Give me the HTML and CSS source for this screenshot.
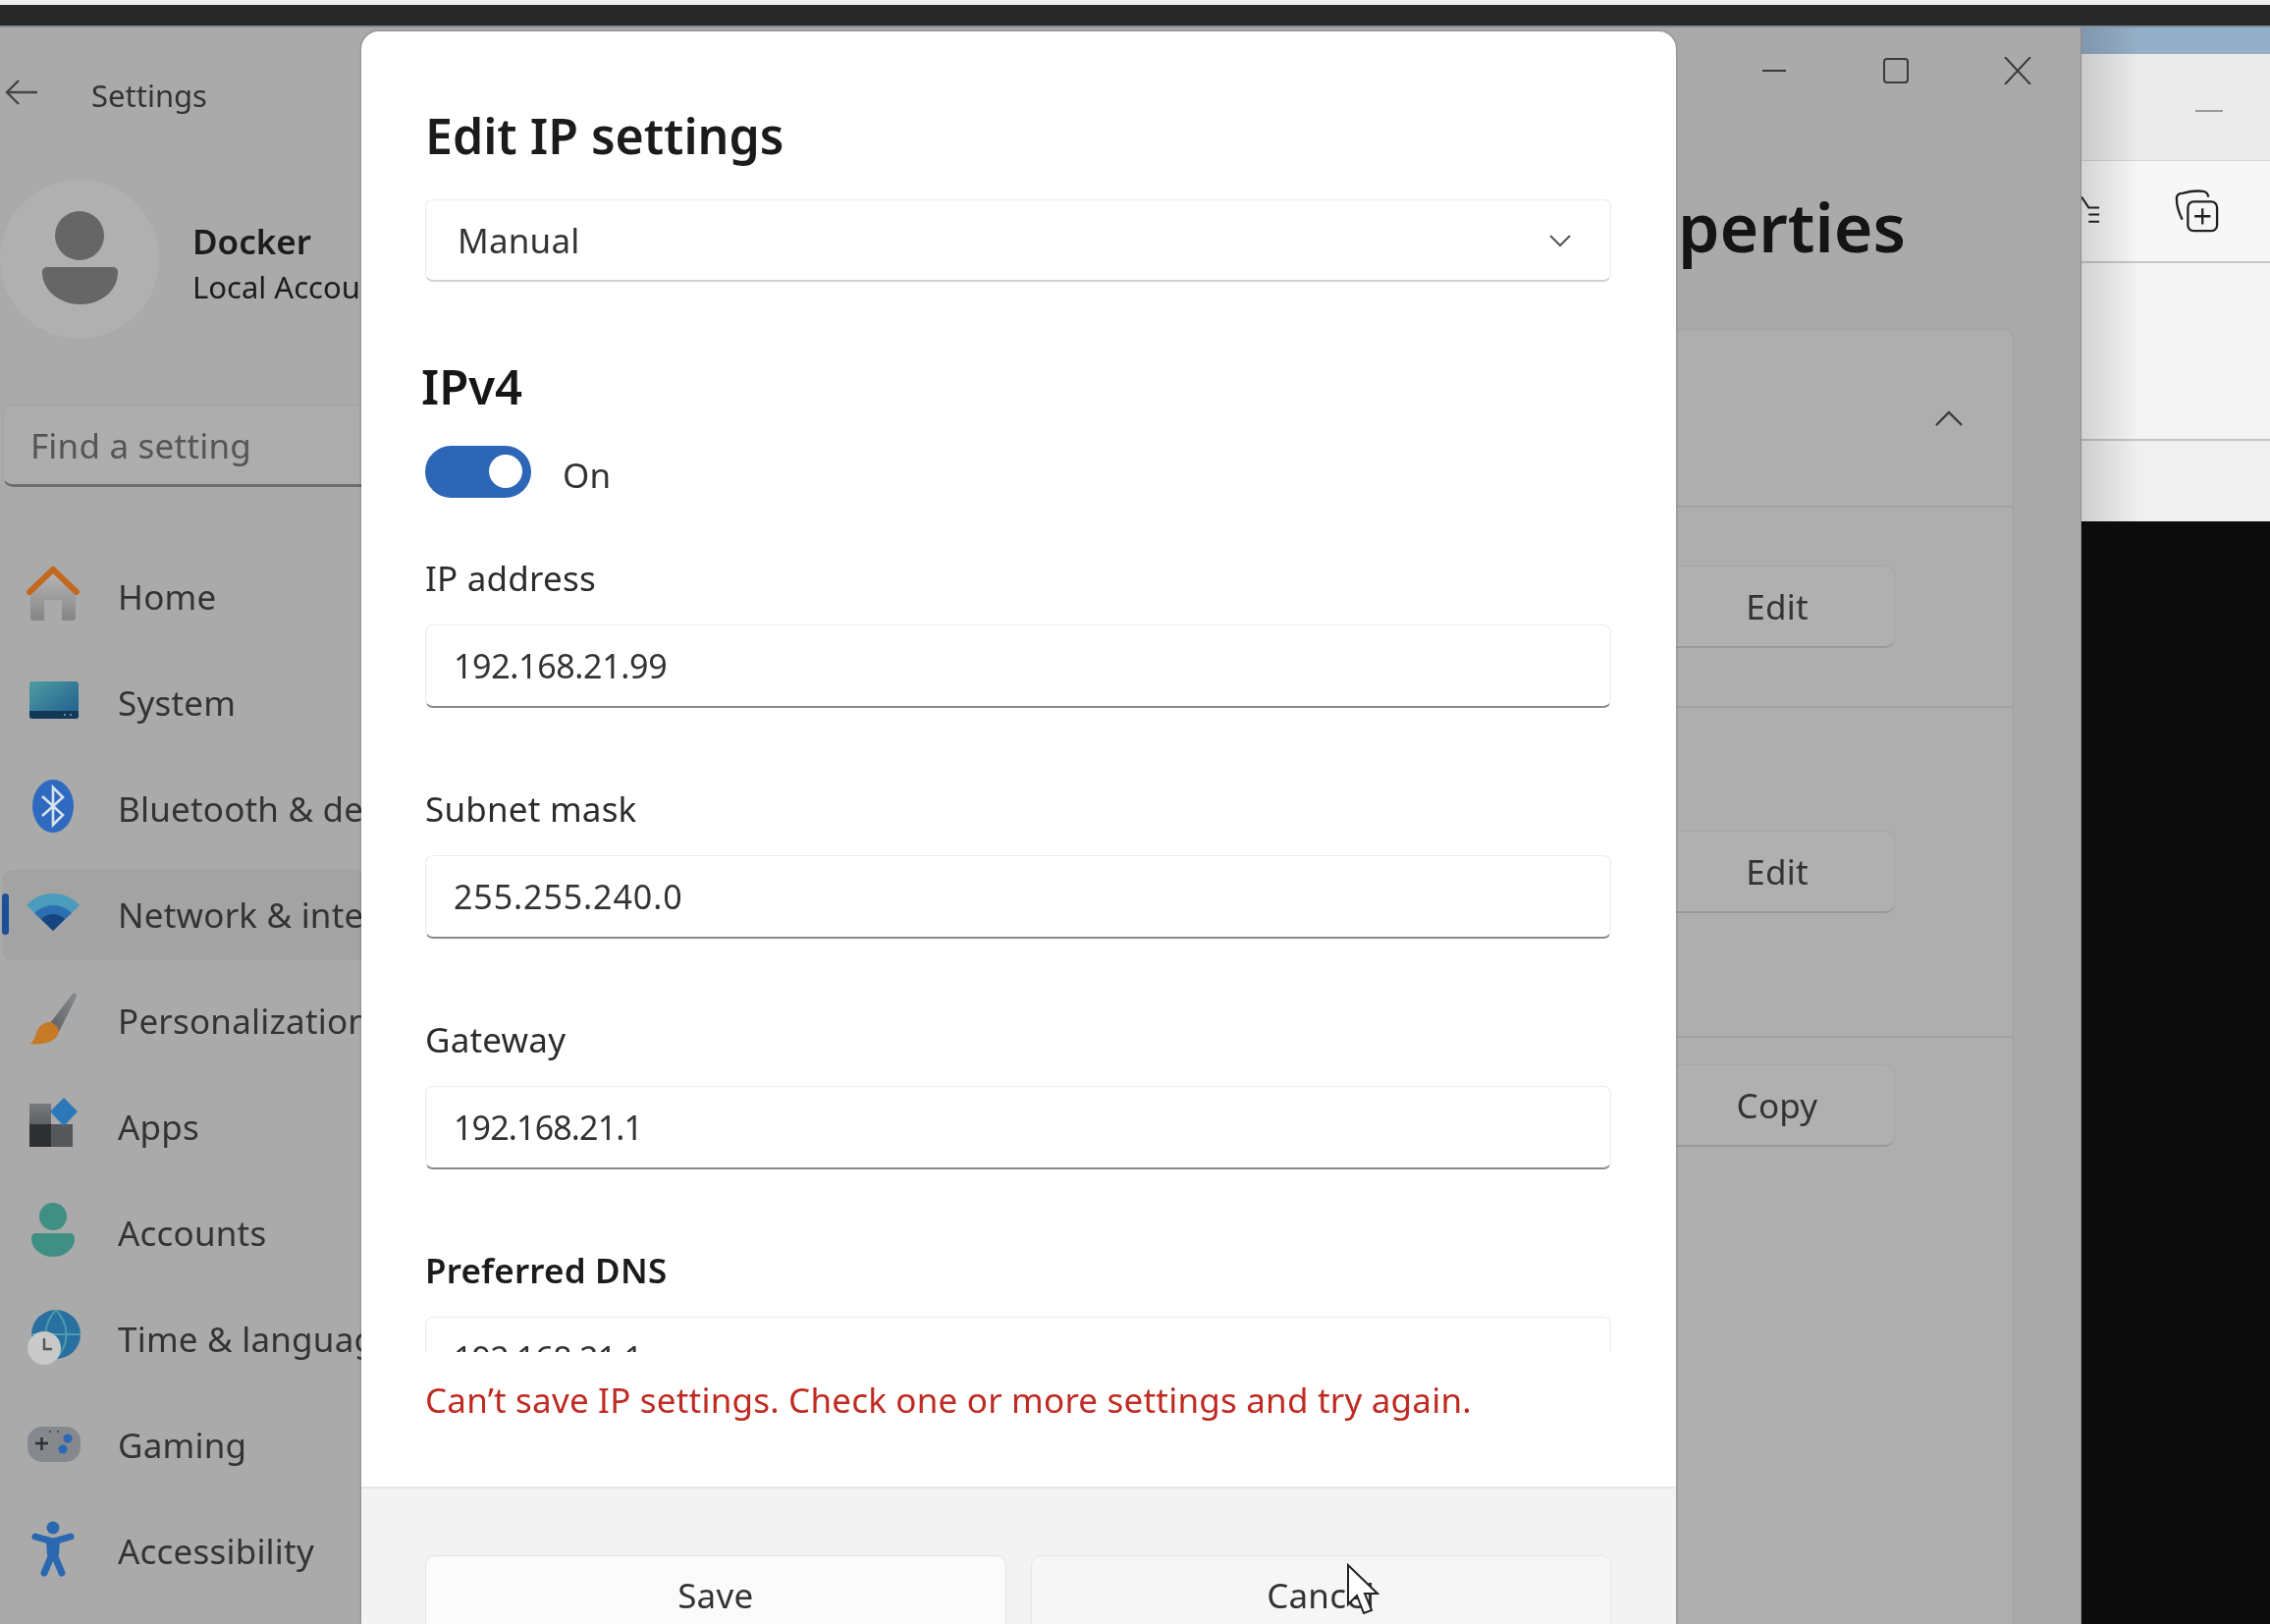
FILE: index.html
```html
<!DOCTYPE html>
<html lang="en">
<head>
    <meta charset="UTF-8">
    <meta name="viewport" content="width=device-width, initial-scale=1.0">
    <title>Edit IP settings</title>
    <link rel="stylesheet" href="styles.css">
</head>

<body>
    <div class="top-strip"></div>
    <div class="desktop">
        <div class="settings-window">
            <aside class="sidebar">
                <div class="app-title">
                    <svg class="back-arrow" viewBox="0 0 34 28"><path d="M33 14H3M14 2 2 14l12 12" fill="none" stroke="#444" stroke-width="2.4"/></svg>
                    <span>Settings</span>
                </div>
                <div class="profile">
                    <div class="avatar">
                        <svg viewBox="0 0 162 162"><circle cx="81" cy="57" r="25" fill="#666"/><path d="M43 94c0-3 2-5 5-5h67c3 0 5 2 5 5 0 20-18 33-38 33s-39-13-39-33z" fill="#666"/></svg>
                    </div>
                    <div class="profile-text">
                        <div class="profile-name">Docker</div>
                        <div class="profile-type">Local Account</div>
                    </div>
                </div>
                <div class="search">Find a setting</div>
                <nav class="nav">
                    <div class="nav-item">
                        <svg class="nav-icon" viewBox="0 0 64 64"><defs><linearGradient id="homeg" x1="0" y1="0" x2="0" y2="1"><stop offset="0" stop-color="#b8b8b8"/><stop offset="1" stop-color="#858585"/></linearGradient></defs><path d="M9 28 32 8l23 20v28c0 2-1 3-3 3H41V38H23v21H12c-2 0-3-1-3-3z" fill="url(#homeg)"/><path d="M8 30 32 7l24 23" fill="none" stroke="#c2691f" stroke-width="6" stroke-linejoin="round" stroke-linecap="round"/></svg>
                        <span>Home</span>
                    </div>
                    <div class="nav-item">
                        <svg class="nav-icon" viewBox="0 0 64 64"><defs><linearGradient id="sysg" x1="0" y1="0" x2="1" y2="1"><stop offset="0" stop-color="#4d9da1"/><stop offset="1" stop-color="#1f5a8e"/></linearGradient></defs><rect x="8" y="13" width="50" height="38" rx="3" fill="url(#sysg)"/><path d="M8 43h50v5c0 2-1 3-3 3H11c-2 0-3-1-3-3z" fill="#123a56"/><circle cx="44" cy="47" r="1" fill="#7fa6b8"/><circle cx="50" cy="47" r="1" fill="#7fa6b8"/></svg>
                        <span>System</span>
                    </div>
                    <div class="nav-item">
                        <svg class="nav-icon" viewBox="0 0 64 64"><ellipse cx="32" cy="32" rx="21" ry="27" fill="#2f6ac0"/><path d="M21 22 42 41 32 51V13l10 10-21 19" fill="none" stroke="#d8e2ee" stroke-width="2.6"/></svg>
                        <span>Bluetooth &amp; devices</span>
                    </div>
                    <div class="nav-item is-active">
                        <svg class="nav-icon" viewBox="0 0 64 64"><path d="M5 25C12 17 22 13 32 13s20 4 27 12L32 51z" fill="#4b9cbc"/><path d="M13 33c5-5 12-8 19-8s14 3 19 8L32 51z" fill="#2b6fb0"/><path d="M20 39c3-3 8-5 12-5s9 2 12 5L32 51z" fill="#17457f"/></svg>
                        <span>Network &amp; internet</span>
                    </div>
                    <div class="nav-item">
                        <svg class="nav-icon" viewBox="0 0 64 64"><defs><linearGradient id="brushg" x1="0" y1="1" x2="1" y2="0"><stop offset="0" stop-color="#5d6063"/><stop offset="1" stop-color="#8a8d90"/></linearGradient></defs><path d="M29 37 52 7c2-2 5 0 4 3L38 46z" fill="url(#brushg)"/><path d="M28 36c4 0 9 4 10 9-1 9-12 15-30 13 5-2 5-6 7-11 2-6 7-11 13-11z" fill="#c77a26"/></svg>
                        <span>Personalization</span>
                    </div>
                    <div class="nav-item">
                        <svg class="nav-icon" viewBox="0 0 64 64"><defs><linearGradient id="appg" x1="0" y1="0" x2="0" y2="1"><stop offset="0" stop-color="#77797c"/><stop offset="1" stop-color="#5f6164"/></linearGradient></defs><rect x="8" y="11" width="22" height="21" fill="url(#appg)"/><rect x="8" y="32" width="22" height="23" fill="#2e2f31"/><rect x="30" y="32" width="22" height="23" fill="#55575a"/><path d="M43 5 57 19 43 34 29 19z" fill="#2c78b8"/></svg>
                        <span>Apps</span>
                    </div>
                    <div class="nav-item">
                        <svg class="nav-icon" viewBox="0 0 64 64"><circle cx="32" cy="18" r="14" fill="#3f8f84"/><path d="M10 40c0-3 2-5 5-5h34c3 0 5 2 5 5 0 12-11 19-22 19S10 52 10 40z" fill="#3f8f84"/></svg>
                        <span>Accounts</span>
                    </div>
                    <div class="nav-item">
                        <svg class="nav-icon" viewBox="0 0 64 64"><circle cx="35" cy="30" r="25" fill="#28709f"/><path d="M10 30h50M35 5c-14 15-14 35 0 50M35 5c14 15 14 35 0 50" fill="none" stroke="#4b9cae" stroke-width="2"/><circle cx="23" cy="44" r="17" fill="#c9c9c9"/><path d="M23 34v11h8" fill="none" stroke="#555" stroke-width="2.4"/></svg>
                        <span>Time &amp; language</span>
                    </div>
                    <div class="nav-item">
                        <svg class="nav-icon" viewBox="0 0 64 64"><rect x="6" y="16" width="54" height="36" rx="15" fill="#85888c"/><path d="M14 33h13M20.500 27v13" stroke="#2f2f2f" stroke-width="2.400"/><circle cx="47" cy="28" r="4.500" fill="#2a68b5"/><circle cx="42" cy="39" r="4.500" fill="#2a68b5"/><circle cx="29" cy="21" r="1" fill="#3a3a3a"/><circle cx="37" cy="21" r="1" fill="#3a3a3a"/></svg>
                        <span>Gaming</span>
                    </div>
                    <div class="nav-item">
                        <svg class="nav-icon" viewBox="0 0 64 64"><circle cx="32" cy="11" r="6.500" fill="#2a68b0"/><path d="M14 20 32 25l18-5M32 36 23 57M32 36l9 21" fill="none" stroke="#2a68b0" stroke-width="7" stroke-linecap="round"/><path d="M25 23h14l-1 16H26z" fill="#2a68b0"/></svg>
                        <span>Accessibility</span>
                    </div>
                </nav>
            </aside>

            <main class="main">
                <div class="window-controls">
                    <svg viewBox="0 0 28 28"><path d="M2 14h24" stroke="#3a3a3a" stroke-width="2"/></svg>
                    <svg viewBox="0 0 28 28"><rect x="2" y="2" width="24" height="24" rx="3" fill="none" stroke="#3a3a3a" stroke-width="2"/></svg>
                    <svg viewBox="0 0 28 28"><path d="M1 0 27 28M27 0 1 28" stroke="#3a3a3a" stroke-width="2"/></svg>
                </div>
                <h1 class="page-heading">properties</h1>
                <section class="card">
                    <div class="card-row row-head">
                        <svg class="chevron-up" viewBox="0 0 30 18"><path d="M2 16 15 3l13 13" fill="none" stroke="#3a3a3a" stroke-width="2.400"/></svg>
                    </div>
                    <div class="card-row row-edit-a"><div class="row-btn">Edit</div></div>
                    <div class="card-row row-edit-b"><div class="row-btn">Edit</div></div>
                    <div class="card-row row-copy"><div class="row-btn">Copy</div></div>
                </section>
            </main>
        </div>

        <div class="other-window">
            <div class="ow-caption"></div>
            <div class="ow-tabs"><svg class="ow-min" viewBox="0 0 28 4"><path d="M0 2h28" stroke="#9a9a9a" stroke-width="2"/></svg></div>
            <div class="ow-toolbar">
                <svg class="ow-list" viewBox="0 0 22 40"><path d="M0 4 8 16h12M8 24h12M8 32h12" fill="none" stroke="#222" stroke-width="2.200"/></svg>
                <svg class="ow-new" viewBox="0 0 48 48"><path d="M9 33C6 27 3 17 3 11c0-4 2-6 6-6 8-2 16-3 22-2 3 0 5 2 6 6" fill="none" stroke="#222" stroke-width="2.400"/><rect x="15" y="14" width="31" height="31" rx="6" fill="#f6f6f6" stroke="#222" stroke-width="2.400"/><path d="M30.500 21v17M22 29.500h17" stroke="#222" stroke-width="2.400"/></svg>
            </div>
            <div class="ow-content"></div>
            <div class="ow-content-low"></div>
            <div class="ow-terminal"></div>
        </div>
    </div>

    <div class="dialog">
        <div class="dialog-body">
            <h2 class="dialog-title">Edit IP settings</h2>
            <div class="select">
                <span>Manual</span>
                <svg viewBox="0 0 24 14"><path d="M2 2l10 10L22 2" fill="none" stroke="#555" stroke-width="2"/></svg>
            </div>
            <h3 class="section-title">IPv4</h3>
            <div class="toggle-row">
                <div class="toggle"><div class="toggle-knob"></div></div>
                <span>On</span>
            </div>
            <div class="fields">
                <div class="field">
                    <div class="field-label">IP address</div>
                    <div class="field-input ip-mid">192.168.21.99</div>
                </div>
                <div class="field">
                    <div class="field-label">Subnet mask</div>
                    <div class="field-input ip-wide">255.255.240.0</div>
                </div>
                <div class="field">
                    <div class="field-label">Gateway</div>
                    <div class="field-input ip-tight">192.168.21.1</div>
                </div>
                <div class="field">
                    <div class="field-label is-strong">Preferred DNS</div>
                    <div class="field-input ip-tight">192.168.21.1</div>
                </div>
            </div>
            <div class="error-msg">Can’t save IP settings. Check one or more settings and try again.</div>
        </div>
        <div class="dialog-footer">
            <div class="footer-btn">Save</div>
            <div class="footer-btn is-cancel">Cancel</div>
        </div>
    </div>

    <svg class="cursor" viewBox="0 0 34 54"><path d="M2 2v40l9-9 7 18 8-3-7-17h13z" fill="#fff" stroke="#222" stroke-width="2"/></svg>
</body>
</html>
```

FILE: styles.css
```css
* {
    box-sizing: border-box;
}

html, body {
    height: 100%;
}

html {
    background: #aaaaaa;
    overflow: hidden;
}

/* the reference is an upscaled capture, hence the slight blur */
body {
    margin: 0;
    width: 2312px;
    height: 1654px;
    overflow: hidden;
    display: flex;
    flex-direction: column;
    font-family: "Noto Sans", "Open Sans", sans-serif;
    font-size: 35px;
    letter-spacing: 0.2px;
    color: #2a2a2a;
    background: #282828;
    position: relative;
    filter: blur(0.7px);
}

.top-strip {
    height: 28px;
    flex: none;
    background: #282828;
    border-top: 5px solid #eeeeee;
    border-bottom: 2px solid #7d8d9b;
}

.desktop {
    flex: 1;
    display: flex;
    min-height: 0;
}

/* settings window, dimmed behind the dialog */
.settings-window {
    width: 2120px;
    flex: none;
    display: flex;
    background: #aaaaaa;
    border-right: 1px solid #8c8c8c;
}

.sidebar {
    width: 370px;
    flex: none;
    overflow: hidden;
    white-space: nowrap;
}

.app-title {
    height: 138px;
    display: flex;
    align-items: center;
    padding-left: 5px;
    font-size: 31px;
    letter-spacing: 0;
    color: #333;
}

.back-arrow {
    width: 34px;
    height: 28px;
    margin-right: 54px;
    margin-top: -6px;
}

.profile {
    margin-top: 17px;
    display: flex;
    align-items: center;
    letter-spacing: 0;
}

.avatar {
    width: 162px;
    height: 162px;
    flex: none;
    border-radius: 50%;
    background: #b0b0b0;
}

.avatar svg {
    display: block;
    width: 162px;
    height: 162px;
}

.profile-text {
    margin-left: 34px;
    margin-top: 10px;
}

.profile-name {
    font-size: 35px;
    font-weight: 600;
    color: #1c1c1c;
    line-height: 46px;
}

.profile-type {
    font-size: 31px;
    color: #1c1c1c;
    line-height: 46px;
}

.search {
    margin: 67px 0 0 3px;
    height: 84px;
    padding-left: 27px;
    display: flex;
    align-items: center;
    color: #555;
    background: #adadad;
    border: 1px solid #a2a2a2;
    border-bottom: 3px solid #6e6e6e;
    border-radius: 10px 0 0 10px;
}

.nav {
    margin-top: 66px;
    display: flex;
    flex-direction: column;
    gap: 16px;
}

.nav-item {
    height: 92px;
    display: flex;
    align-items: center;
    padding-left: 22px;
    gap: 34px;
    color: #333;
    position: relative;
}

.nav-item span {
    margin-top: -2px;
}

.nav-item.is-active {
    background: #a3a3a3;
    border-radius: 10px 0 0 10px;
    margin-left: 2px;
    padding-left: 20px;
}

.nav-item.is-active::before {
    content: "";
    position: absolute;
    left: 0;
    top: 24px;
    width: 7px;
    height: 42px;
    border-radius: 4px;
    background: #1d5096;
}

.nav-icon {
    width: 64px;
    height: 64px;
    flex: none;
    margin-top: -6px;
}

.main {
    flex: 1;
    display: flex;
    flex-direction: column;
    min-width: 0;
    overflow: hidden;
}

.window-controls {
    height: 88px;
    display: flex;
    justify-content: flex-end;
    align-items: center;
    gap: 96px;
    padding: 0 50px 0 0;
}

.window-controls svg {
    width: 28px;
    height: 28px;
}

.page-heading {
    margin: 75px 178px 0 0;
    height: 80px;
    line-height: 80px;
    font-size: 68px;
    font-weight: 600;
    letter-spacing: 0;
    color: #141414;
    text-align: right;
}

.card {
    flex: 1;
    margin: 64px 68px 0 0;
    background: #aeaeae;
    border: 1px solid #a2a2a2;
    border-bottom: none;
    border-radius: 10px 10px 0 0;
    display: flex;
    flex-direction: column;
    align-items: stretch;
}

.card-row {
    display: flex;
    justify-content: flex-end;
    border-bottom: 2px solid #a2a2a2;
    padding-right: 120px;
}

.row-head {
    height: 181px;
    align-items: center;
    padding-right: 50px;
}

.chevron-up {
    width: 30px;
    height: 18px;
}

.row-edit-a {
    height: 204px;
    padding-top: 59px;
}

.row-edit-b {
    height: 336px;
    padding-top: 125px;
}

.row-copy {
    flex: 1;
    border-bottom: none;
    padding-top: 27px;
}

.row-btn {
    width: 300px;
    height: 84px;
    padding-left: 60px;
    display: flex;
    align-items: center;
    justify-content: center;
    color: #333;
    background: #b0b0b0;
    border: 1px solid #a6a6a6;
    border-bottom: 2px solid #999;
    border-radius: 10px;
}

/* window peeking out at the right */
.other-window {
    flex: 1;
    display: flex;
    flex-direction: column;
    position: relative;
    background: #0c0c0c;
}

.other-window::after {
    content: "";
    position: absolute;
    left: 0;
    top: 0;
    width: 60px;
    height: 504px;
    background: linear-gradient(to right, rgba(0, 0, 0, 0.14), rgba(0, 0, 0, 0));
}

.ow-caption {
    height: 27px;
    background: #94afc8;
}

.ow-tabs {
    height: 109px;
    background: #ebebeb;
    border-bottom: 1px solid #d6d6d6;
    padding: 56px 0 0 116px;
}

.ow-min {
    display: block;
    width: 28px;
    height: 4px;
}

.ow-toolbar {
    height: 104px;
    background: #f7f7f7;
    border-bottom: 2px solid #c8c8c8;
    display: flex;
    align-items: center;
}

.ow-list {
    width: 20px;
    height: 36px;
}

.ow-new {
    width: 46px;
    height: 46px;
    margin-left: 74px;
}

.ow-content {
    height: 181px;
    background: #f4f4f4;
    border-bottom: 2px solid #c4c4c4;
}

.ow-content-low {
    height: 82px;
    background: #f0f0f0;
}

.ow-terminal {
    flex: 1;
    background: #0c0c0c;
}

/* dialog */
.dialog {
    position: absolute;
    left: 368px;
    top: 32px;
    width: 1339px;
    height: 1622px;
    display: flex;
    flex-direction: column;
    background: #ffffff;
    border-radius: 18px 18px 0 0;
    overflow: hidden;
    box-shadow: 0 0 3px rgba(0, 0, 0, 0.35);
}

.dialog-body {
    height: 1484px;
    flex: none;
    padding: 78px 66px 0 65px;
    border-bottom: 2px solid #e6e6e6;
}

.dialog-title {
    margin: 0;
    height: 56px;
    line-height: 56px;
    font-size: 50px;
    font-weight: 600;
    letter-spacing: 0;
    color: #1b1b1b;
}

.select {
    margin-top: 37px;
    height: 84px;
    padding: 0 39px 0 32px;
    display: flex;
    align-items: center;
    justify-content: space-between;
    color: #333;
    border: 1px solid #ececec;
    border-bottom: 2px solid #d2d2d2;
    border-radius: 8px;
}

.select svg {
    width: 24px;
    height: 14px;
}

.section-title {
    margin: 78px 0 0 -4px;
    height: 56px;
    line-height: 56px;
    font-size: 49px;
    font-weight: 600;
    letter-spacing: 0;
    color: #161616;
}

.toggle-row {
    margin-top: 33px;
    height: 53px;
    display: flex;
    align-items: center;
    gap: 32px;
    color: #333;
}

.toggle-row span {
    margin-top: 5px;
}

.toggle {
    width: 108px;
    height: 53px;
    padding: 9px 0 0 65px;
    border-radius: 27px;
    background: #2d66b7;
}

.toggle-knob {
    width: 34px;
    height: 34px;
    border-radius: 50%;
    background: #ffffff;
}

.fields {
    margin-top: 61px;
    height: 809px;
    overflow: hidden;
}

.field {
    margin-bottom: 82px;
}

.field-label {
    height: 44px;
    line-height: 42px;
    color: #2c2c2c;
}

.field-label.is-strong {
    font-weight: 600;
    color: #1b1b1b;
}

.field-input {
    margin-top: 24px;
    height: 85px;
    padding-left: 28px;
    display: flex;
    align-items: center;
    font-size: 34px;
    color: #333;
    border: 1px solid #ececec;
    border-bottom: 2px solid #8a8a8a;
    border-radius: 8px;
}

/* digits run narrower or wider than in Noto Sans, depending on how many 1s there are */
.field-input.ip-mid {
    letter-spacing: -0.35px;
}

.field-input.ip-wide {
    letter-spacing: 0.9px;
}

.field-input.ip-tight {
    letter-spacing: -0.85px;
}

.error-msg {
    margin-top: 25px;
    height: 48px;
    line-height: 48px;
    white-space: nowrap;
    color: #bf2b22;
}

.dialog-footer {
    flex: 1;
    display: flex;
    gap: 25px;
    padding: 68px 66px 0 65px;
    background: #f3f3f3;
}

.footer-btn {
    flex: 1;
    height: 84px;
    padding-bottom: 3px;
    display: flex;
    align-items: center;
    justify-content: center;
    color: #333;
    background: #fbfbfb;
    border: 1px solid #e6e6e6;
    border-radius: 10px;
}

.footer-btn.is-cancel {
    background: #f6f6f6;
}

.cursor {
    position: absolute;
    left: 1371px;
    top: 1592px;
    width: 34px;
    height: 54px;
}
```
